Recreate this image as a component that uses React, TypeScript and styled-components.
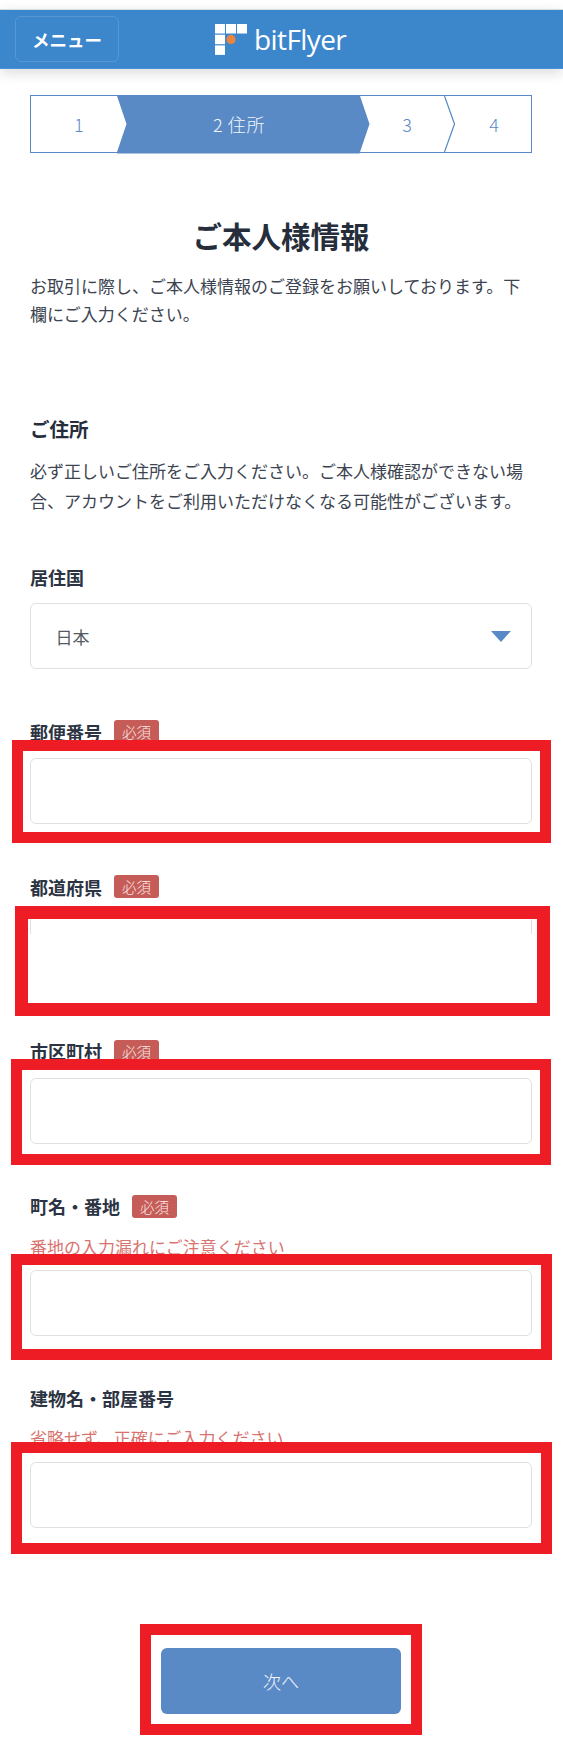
import React from "react";
import styled, { createGlobalStyle } from "styled-components";

const Global = createGlobalStyle`
  html, body { margin: 0; padding: 0; background: #fff; }
  body { font-family: "Noto Sans CJK JP", "Noto Sans", sans-serif; color: #2c3443; }
  * { box-sizing: border-box; }
`;

const Page = styled.div`
  width: 563px;
  padding-top: 9px;
  padding-bottom: 42px;
  overflow: hidden;
  background: #fff;
`;

const Header = styled.header`
  height: 60px;
  display: flex;
  align-items: center;
  padding-left: 15px;
  background: #3c86cc;
  border-top: 1px solid #d9dde2;
  border-bottom: 1px solid #4a90d8;
  box-shadow: 0 4px 12px rgba(0, 0, 0, 0.14);
`;

const MenuButton = styled.button`
  width: 104px;
  height: 46px;
  padding: 0;
  background: transparent;
  border: 1.5px solid rgba(255, 255, 255, 0.14);
  border-radius: 6px;
  color: #fff;
  font: 700 17.5px "Noto Sans CJK JP", sans-serif;
`;

const Logo = styled.div`
  display: flex;
  align-items: center;
  gap: 7px;
  margin-left: 96px;
`;

const LogoText = styled.span`
  font: 400 28px/36px "Open Sans", sans-serif;
  letter-spacing: -0.6px;
  color: #fff;
`;

const Main = styled.main`
  padding: 0 31px 0 30px;
`;

const Stepper = styled.ol`
  display: flex;
  height: 58px;
  margin: 26px 0 0;
  padding: 0;
  list-style: none;
  border: 1.5px solid #5a8ac6;
`;

const Step = styled.li<{ $width: number; $pull?: number; $padLeft?: number; $padRight?: number; $active?: boolean }>`
  position: relative;
  flex: ${(p) => (p.$width ? `0 0 ${p.$width}px` : "1 1 0")};
  margin-left: ${(p) => p.$pull ?? 0}px;
  padding: 0 ${(p) => p.$padRight ?? 0}px 0 ${(p) => p.$padLeft ?? 0}px;
  margin-top: ${(p) => (p.$active ? "-1.5px" : "0")};
  margin-bottom: ${(p) => (p.$active ? "-1.5px" : "0")};
  display: flex;
  align-items: center;
  justify-content: center;
  font-size: 18px;
  font-weight: 300;
  letter-spacing: ${(p) => (p.$active ? "0.6px" : "0")};
  color: ${(p) => (p.$active ? "#f2f6fb" : "#5a8ac6")};
  background: ${(p) => (p.$active ? "#5a8ac6" : "transparent")};
  clip-path: ${(p) =>
    p.$active
      ? "polygon(0 0, calc(100% - 10px) 0, 100% 50%, calc(100% - 10px) 100%, 0 100%, 10px 50%)"
      : "none"};
`;

const StepLine = styled.svg`
  position: absolute;
  top: 0;
  right: 0;
  width: 11px;
  height: 100%;
`;

const Title = styled.h1`
  margin: 62px 0 0;
  font-size: 29.5px;
  line-height: 40px;
  font-weight: 700;
  text-align: center;
  color: #262e3c;
`;

const Paragraph = styled.p<{ $top: number; $line: number }>`
  margin: ${(p) => p.$top}px 0 0;
  font-size: 17px;
  line-height: ${(p) => p.$line}px;
  color: #3c4451;
`;

const SectionTitle = styled.h2`
  margin: 87.5px 0 0;
  font-size: 19.5px;
  line-height: 26px;
  font-weight: 700;
  color: #262e3c;
`;

const Field = styled.div<{ $top?: number }>`
  display: flex;
  flex-direction: column;
  margin-top: ${(p) => p.$top ?? 51}px;
`;

const LabelRow = styled.label`
  display: flex;
  align-items: center;
  gap: 12px;
  height: 23px;
  font-size: 18px;
  font-weight: 700;
  color: #2c3443;
`;

const Badge = styled.span`
  width: 45px;
  height: 23px;
  display: flex;
  align-items: center;
  justify-content: center;
  border-radius: 3px;
  background: #c65c57;
  color: #fbeaea;
  font-size: 14.5px;
  font-weight: 300;
`;

const Hint = styled.div<{ $top: number; $bottom: number }>`
  margin: ${(p) => p.$top}px 0 ${(p) => p.$bottom}px;
  font-size: 17px;
  line-height: 24px;
  color: #d8746f;
`;

const ControlWrap = styled.div<{ $top?: number }>`
  position: relative;
  margin-top: ${(p) => p.$top ?? 0}px;
`;

const TextInput = styled.input<{ $height?: number }>`
  display: block;
  width: 100%;
  height: ${(p) => p.$height ?? 66}px;
  border: 1.5px solid #dfe0e2;
  border-radius: 6px;
  background: #fff;
  outline: none;
`;

const SelectBox = styled.div`
  height: 66px;
  display: flex;
  align-items: center;
  justify-content: space-between;
  padding: 0 20px 0 24.5px;
  border: 1.5px solid #dfe0e2;
  border-radius: 6px;
  font-size: 17px;
  color: #555a62;
`;

const Caret = styled.span`
  width: 0;
  height: 0;
  border-left: 10.5px solid transparent;
  border-right: 10.5px solid transparent;
  border-top: 11px solid #5a8ac6;
`;

const Redaction = styled.div<{ $t: number; $r: number; $b: number; $l: number; $w?: number; $patch?: number }>`
  position: absolute;
  top: ${(p) => p.$t}px;
  right: ${(p) => p.$r}px;
  bottom: ${(p) => p.$b}px;
  left: ${(p) => p.$l}px;
  border: ${(p) => p.$w ?? 11.5}px solid #ee1c25;
  pointer-events: none;
  ${(p) =>
    p.$patch !== undefined
      ? `&::after { content: ""; position: absolute; inset: ${p.$patch}px 0 0 0; background: #fff; }`
      : ""}
`;

const ButtonWrap = styled.div`
  position: relative;
  width: 240px;
  margin: 120px auto 0;
`;

const NextButton = styled.button`
  display: block;
  width: 100%;
  height: 66px;
  border: 0;
  border-radius: 6px;
  background: #5a8ac6;
  color: #f2f6fb;
  font: 300 18px "Noto Sans CJK JP", sans-serif;
`;

const LogoMark = () => (
  <svg width="32" height="31" viewBox="0 0 32 31" aria-hidden="true">
    <g fill="#fff">
      <rect x="0" y="0" width="10" height="9.5" />
      <rect x="11" y="0" width="10" height="9.5" />
      <rect x="22" y="0" width="10" height="9.5" />
      <rect x="0" y="10.7" width="10" height="9.5" />
      <rect x="0" y="21.4" width="10" height="9.5" />
    </g>
    <circle cx="16" cy="15.4" r="4.6" fill="#e98540" />
  </svg>
);

export default function App() {
  return (
    <Page>
      <Global />
      <Header>
        <MenuButton>メニュー</MenuButton>
        <Logo>
          <LogoMark />
          <LogoText>bitFlyer</LogoText>
        </Logo>
      </Header>
      <Main>
        <Stepper>
          <Step $width={85.5} $padLeft={10}>1</Step>
          <Step $width={253} $padRight={8} $active>2 住所</Step>
          <Step $width={95} $pull={-10}>
            3
            <StepLine viewBox="0 0 11 55" preserveAspectRatio="none">
              <polyline points="0.5,0 10.5,27.5 0.5,55" fill="none" stroke="#5a8ac6" strokeWidth="1.2" />
            </StepLine>
          </Step>
          <Step $width={0} $pull={-10.5} $padLeft={13}>4</Step>
        </Stepper>

        <Title>ご本人様情報</Title>
        <Paragraph $top={16.5} $line={28.5}>
          お取引に際し、ご本人様情報のご登録をお願いしております。下欄にご入力ください。
        </Paragraph>

        <SectionTitle>ご住所</SectionTitle>
        <Paragraph $top={14} $line={30}>
          必ず正しいご住所をご入力ください。ご本人様確認ができない場合、アカウントをご利用いただけなくなる可能性がございます。
        </Paragraph>

        <Field $top={49}>
          <LabelRow>居住国</LabelRow>
          <ControlWrap $top={15}>
            <SelectBox>
              日本
              <Caret />
            </SelectBox>
          </ControlWrap>
        </Field>

        <Field>
          <LabelRow>郵便番号<Badge>必須</Badge></LabelRow>
          <ControlWrap $top={15}>
            <TextInput />
            <Redaction $t={-18} $r={-19} $b={-19} $l={-18} />
          </ControlWrap>
        </Field>

        <Field>
          <LabelRow>都道府県<Badge>必須</Badge></LabelRow>
          <ControlWrap $top={15}>
            <TextInput $height={77} />
            <Redaction $t={-7} $r={-18} $b={-26} $l={-15} $w={13} $patch={15} />
          </ControlWrap>
        </Field>

        <Field $top={49.5}>
          <LabelRow>市区町村<Badge>必須</Badge></LabelRow>
          <ControlWrap $top={15}>
            <TextInput />
            <Redaction $t={-19} $r={-19} $b={-21} $l={-19} />
          </ControlWrap>
        </Field>

        <Field>
          <LabelRow>町名・番地<Badge>必須</Badge></LabelRow>
          <Hint $top={17} $bottom={11}>番地の入力漏れにご注意ください</Hint>
          <ControlWrap>
            <TextInput />
            <Redaction $t={-16} $r={-19.5} $b={-24} $l={-19.5} />
          </ControlWrap>
        </Field>

        <Field>
          <LabelRow>建物名・部屋番号</LabelRow>
          <Hint $top={16} $bottom={12}>省略せず、正確にご入力ください</Hint>
          <ControlWrap>
            <TextInput />
            <Redaction $t={-20} $r={-20} $b={-26} $l={-19} />
          </ControlWrap>
        </Field>

        <ButtonWrap>
          <NextButton>次へ</NextButton>
          <Redaction $t={-24} $r={-21} $b={-21} $l={-21.5} />
        </ButtonWrap>
      </Main>
    </Page>
  );
}
